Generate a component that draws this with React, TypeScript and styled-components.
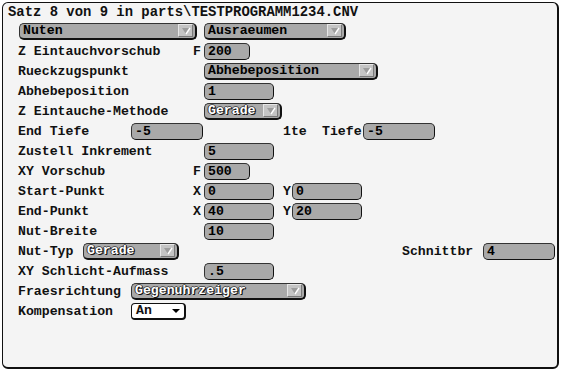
import styled, { createGlobalStyle } from 'styled-components';

const GlobalStyle = createGlobalStyle`
  body {
    margin: 0;
    background: #ffffff;
    font-family: 'Liberation Mono', 'DejaVu Sans Mono', monospace;
    font-weight: bold;
    color: #111;
  }
`;

function Arrow() {
  return (
    <ArrowBox>
      <svg width="10" height="8" viewBox="0 0 10 8">
        <polygon points="1,1 9,1 5,7" fill="#9c9c9c" />
        <line x1="9" y1="1" x2="5" y2="7" stroke="#ffffff" strokeWidth="1.4" />
      </svg>
    </ArrowBox>
  );
}

function Dropdown({ value, width, light }: { value: string; width: number; light?: boolean }) {
  return (
    <DropBox $width={width}>
      <DropText $light={light}>{value}</DropText>
      <Arrow />
    </DropBox>
  );
}

export default function App() {
  return (
    <>
      <GlobalStyle />
      <Frame>
        <Title>Satz 8 von 9 in parts\TESTPROGRAMM1234.CNV</Title>

        <Row>
          <Indent $width={1} />
          <Dropdown value="Nuten" width={178} />
          <Indent $width={7} />
          <Dropdown value="Ausraeumen" width={142} />
        </Row>

        <Row>
          <Label $width={175}>Z Eintauchvorschub</Label>
          <Prefix $width={11}>F</Prefix>
          <Field $width={46}>200</Field>
        </Row>

        <Row>
          <Label $width={186}>Rueckzugspunkt</Label>
          <Dropdown value="Abhebeposition" width={174} />
        </Row>

        <Row>
          <Label $width={186}>Abhebeposition</Label>
          <Field $width={70}>1</Field>
        </Row>

        <Row>
          <Label $width={186}>Z Eintauche-Methode</Label>
          <Dropdown value="Gerade" width={78} light />
        </Row>

        <Row>
          <Label $width={113}>End Tiefe</Label>
          <Field $width={72}>-5</Field>
          <Indent $width={80} />
          <Label $width={39}>1te</Label>
          <Label $width={41}>Tiefe</Label>
          <Field $width={72}>-5</Field>
        </Row>

        <Row>
          <Label $width={186}>Zustell Inkrement</Label>
          <Field $width={70}>5</Field>
        </Row>

        <Row>
          <Label $width={175}>XY Vorschub</Label>
          <Prefix $width={11}>F</Prefix>
          <Field $width={46}>500</Field>
        </Row>

        <Row>
          <Label $width={175}>Start-Punkt</Label>
          <Prefix $width={11}>X</Prefix>
          <Field $width={70}>0</Field>
          <Indent $width={9} />
          <Prefix $width={9}>Y</Prefix>
          <Field $width={70}>0</Field>
        </Row>

        <Row>
          <Label $width={175}>End-Punkt</Label>
          <Prefix $width={11}>X</Prefix>
          <Field $width={70}>40</Field>
          <Indent $width={9} />
          <Prefix $width={9}>Y</Prefix>
          <Field $width={70}>20</Field>
        </Row>

        <Row>
          <Label $width={186}>Nut-Breite</Label>
          <Field $width={70}>10</Field>
        </Row>

        <Row>
          <Label $width={65}>Nut-Typ</Label>
          <Dropdown value="Gerade" width={96} light />
          <Indent $width={223} />
          <Label $width={81}>Schnittbr</Label>
          <Field $width={72}>4</Field>
        </Row>

        <Row>
          <Label $width={186}>XY Schlicht-Aufmass</Label>
          <Field $width={70}>.5</Field>
        </Row>

        <Row>
          <Label $width={113}>Fraesrichtung</Label>
          <Dropdown value="Gegenuhrzeiger" width={175} light />
        </Row>

        <Row>
          <Label $width={113}>Kompensation</Label>
          <Combo>
            <span>An</span>
            <ComboArrow />
          </Combo>
        </Row>
      </Frame>
    </>
  );
}

const Frame = styled.div`
  box-sizing: border-box;
  margin: 2px;
  width: 557px;
  height: 367px;
  padding-left: 15px;
  background: #f4f4f4;
  border: 1px solid #111;
  border-right-width: 2px;
  border-bottom-width: 2px;
  border-radius: 6px;
`;

const Title = styled.div`
  height: 18px;
  line-height: 18px;
  margin-left: -10px;
  font-size: 13.9px;
  white-space: nowrap;
`;

const Row = styled.div`
  display: flex;
  align-items: center;
  height: 20px;
  font-size: 13.2px;
  white-space: nowrap;
`;

const Label = styled.div<{ $width: number }>`
  flex: 0 0 ${(p) => p.$width}px;
  width: ${(p) => p.$width}px;
`;

const Prefix = styled.div<{ $width: number }>`
  flex: 0 0 ${(p) => p.$width}px;
  width: ${(p) => p.$width}px;
`;

const Indent = styled.div<{ $width: number }>`
  flex: 0 0 ${(p) => p.$width}px;
`;

const Field = styled.div<{ $width: number }>`
  box-sizing: border-box;
  flex: 0 0 ${(p) => p.$width}px;
  height: 17px;
  line-height: 15px;
  padding-left: 3px;
  background: #a9a9a9;
  border: 1px solid #333;
  border-right-color: #111;
  border-bottom-color: #111;
  border-radius: 5px;
  color: #000;
`;

const DropBox = styled.div<{ $width: number }>`
  box-sizing: border-box;
  flex: 0 0 ${(p) => p.$width}px;
  display: flex;
  align-items: center;
  justify-content: space-between;
  height: 17px;
  padding: 0 2px 0 3px;
  background: #a9a9a9;
  border: 1px solid #333;
  border-right: 2px solid #111;
  border-bottom: 2px solid #111;
  border-radius: 5px;
`;

const DropText = styled.span<{ $light?: boolean }>`
  line-height: 14px;
  color: ${(p) => (p.$light ? '#ffffff' : '#000')};
  text-shadow: ${(p) =>
    p.$light ? '1px 1px 0 #111, -1px 0 0 #333, 0 -1px 0 #555, 1px 0 0 #222' : 'none'};
`;

const ArrowBox = styled.div`
  box-sizing: border-box;
  display: flex;
  align-items: center;
  justify-content: center;
  width: 15px;
  height: 13px;
  background: #c4c4c4;
  border: 1px solid #e6e6e6;
  border-right-color: #7a7a7a;
  border-bottom-color: #7a7a7a;
`;

const Combo = styled.div`
  box-sizing: border-box;
  flex: 0 0 55px;
  display: flex;
  align-items: center;
  justify-content: space-between;
  height: 17px;
  padding: 0 4px;
  background: #ffffff;
  border: 1px solid #111;
  border-right-width: 2px;
  border-bottom-width: 2px;
  border-radius: 4px;
  line-height: 14px;
`;

const ComboArrow = styled.span`
  width: 0;
  height: 0;
  border-left: 4px solid transparent;
  border-right: 4px solid transparent;
  border-top: 4px solid #000;
`;
